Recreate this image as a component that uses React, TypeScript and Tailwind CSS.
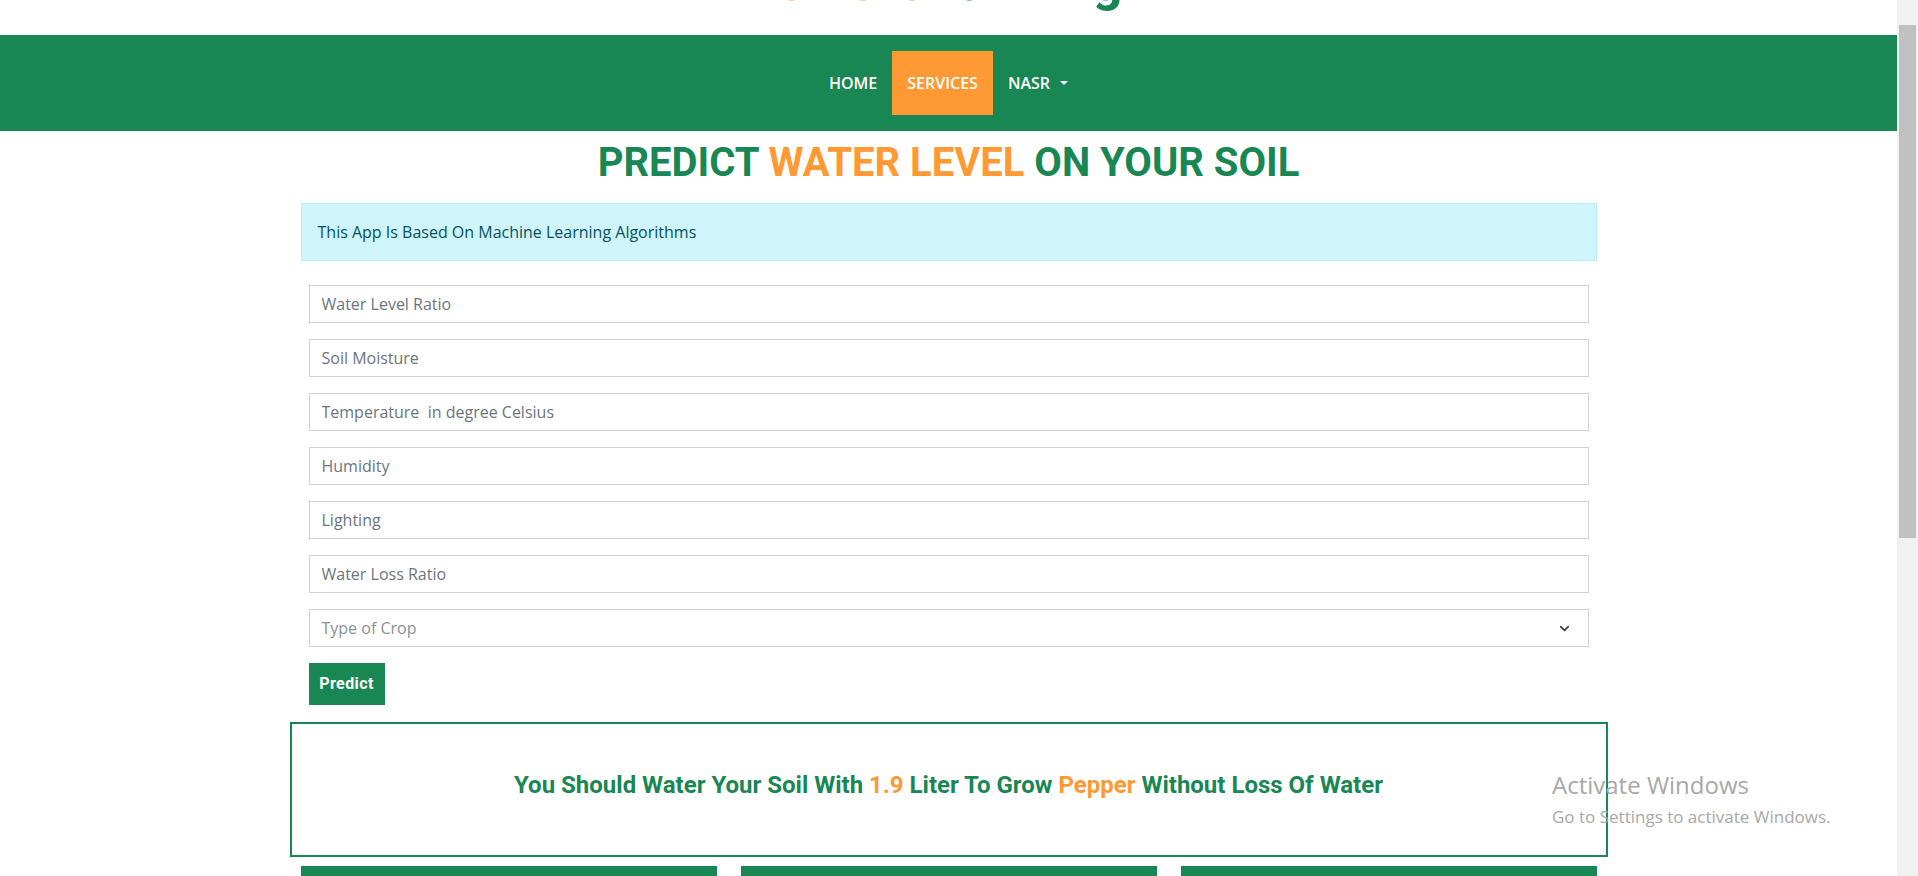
import { ChevronDown } from "lucide-react";

const FIELDS = [
  "Water Level Ratio",
  "Soil Moisture",
  "Temperature  in degree Celsius",
  "Humidity",
  "Lighting",
  "Water Loss Ratio",
];

function Scrollbar() {
  return (
    <div className="flex w-[21px] shrink-0 flex-col bg-[#f1f1f1] pt-[25px]">
      <div className="mx-auto h-[513px] w-[17px] shrink-0 bg-[#c1c1c1]" />
    </div>
  );
}

function NavBar() {
  return (
    <nav className="flex h-[96px] items-center justify-center bg-[#198754] font-['Open_Sans',sans-serif] text-[16px] font-semibold uppercase text-white">
      <a className="flex h-[64px] items-center px-[15px]">Home</a>
      <a className="flex h-[64px] items-center bg-[#ff9933] px-[15px]">Services</a>
      <a className="flex h-[64px] items-center gap-[10px] px-[15px]">
        Nasr
        <span className="h-0 w-0 border-x-[4px] border-t-[4px] border-x-transparent border-t-white" />
      </a>
    </nav>
  );
}

export default function App() {
  return (
    <div className="relative flex h-[876px] w-full overflow-hidden bg-white">
      <div className="min-w-0 flex-1">
        {/* site title, page is scrolled so only its bottom shows */}
        <div className="h-[35px] overflow-hidden text-center font-['Roboto',sans-serif] text-[52px] font-bold leading-none">
          <div className="-translate-y-[43px]">
            <span className="text-[#ff9933]">Smart </span>
            <span className="text-[#198754]">Farming</span>
          </div>
        </div>

        <NavBar />

        <main className="mx-auto w-[1296px]">
          <h1 className="mt-[8px] text-center font-['Roboto',sans-serif] text-[40px] font-bold leading-[48px] text-[#198754]">
            PREDICT <span className="text-[#ff9933]">WATER LEVEL</span> ON YOUR SOIL
          </h1>

          <div className="mt-[16px] border border-[#b6effb] bg-[#cff4fc] px-[16px] py-[16px] font-['Open_Sans',sans-serif] text-[16px] leading-[24px] text-[#055160]">
            This App Is Based On Machine Learning Algorithms
          </div>

          <form className="mt-[24px] flex flex-col gap-[16px] px-[8px] font-['Open_Sans',sans-serif]">
            {FIELDS.map((f) => (
              <input
                key={f}
                placeholder={f}
                className="h-[38px] w-full border border-[#ced4da] px-[12px] text-[16px] text-[#212529] outline-none placeholder:text-[#6c757d]"
              />
            ))}
            <div className="flex h-[38px] items-center justify-between border border-[#ced4da] pl-[12px] pr-[16px] text-[16px] text-[#8a9199]">
              <span>Type of Crop</span>
              <ChevronDown className="size-[15px] text-[#343a40]" strokeWidth={2.5} />
            </div>
            <button
              type="button"
              className="h-[42px] w-[76px] bg-[#198754] font-['Roboto',sans-serif] text-[16px] font-bold tracking-wide text-white"
            >
              Predict
            </button>
          </form>

          <section className="mx-[-11px] mt-[17px] flex h-[135px] items-center justify-center border-2 border-[#198754] pb-[10px] font-['Roboto',sans-serif] text-[24px] font-bold text-[#198754]">
            <p>
              You Should Water Your Soil With <span className="text-[#ff9933]">1.9</span> Liter To Grow{" "}
              <span className="text-[#ff9933]">Pepper</span> Without Loss Of Water
            </p>
          </section>

          <div className="mt-[9px] grid grid-cols-3 gap-[24px]">
            <div className="h-[120px] bg-[#198754]" />
            <div className="h-[120px] bg-[#198754]" />
            <div className="h-[120px] bg-[#198754]" />
          </div>
        </main>
      </div>

      <Scrollbar />

      {/* OS activation watermark */}
      <div className="pointer-events-none absolute left-[1552px] top-[770px] font-['Open_Sans',sans-serif] text-[#a8a8a8]">
        <div className="text-[24px] leading-[30px]">Activate Windows</div>
        <div className="mt-[7px] text-[17px] leading-[20px]">Go to Settings to activate Windows.</div>
      </div>
    </div>
  );
}
